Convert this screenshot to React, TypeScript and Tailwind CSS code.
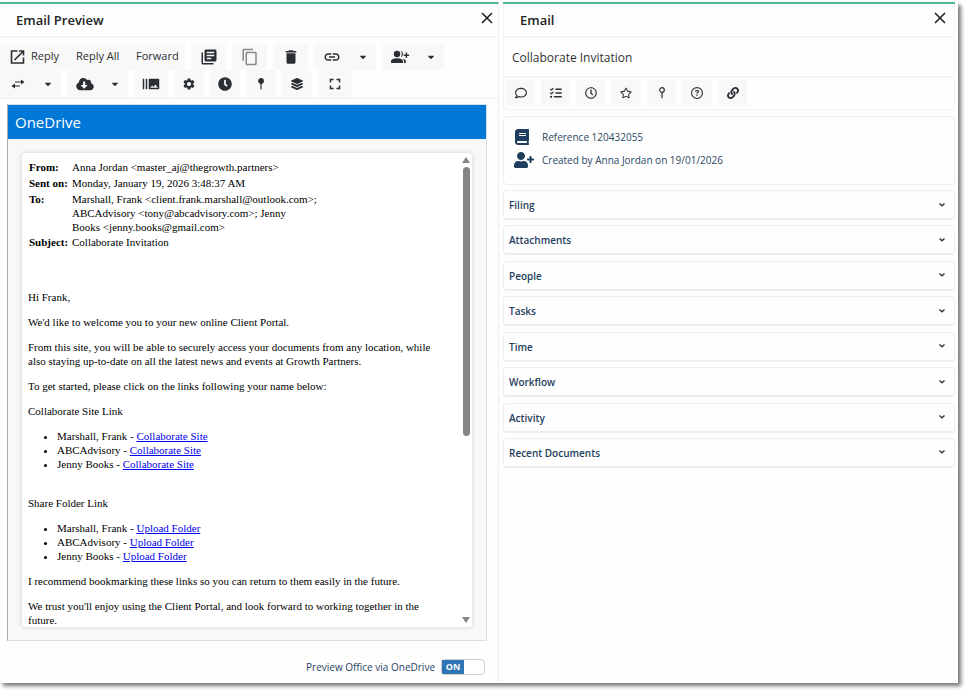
import type { ReactNode } from "react";
import {
  FaBook,
  FaCaretDown,
  FaClock,
  FaCloudDownloadAlt,
  FaLayerGroup,
  FaLink,
  FaRegClock,
  FaRegComment,
  FaRegStar,
  FaUserPlus,
} from "react-icons/fa";
import { FaListCheck, FaRegCircleQuestion } from "react-icons/fa6";
import {
  MdBurstMode,
  MdContentCopy,
  MdDelete,
  MdFullscreen,
  MdLibraryBooks,
  MdLink,
  MdSettings,
} from "react-icons/md";

const sections = [
  "Filing",
  "Attachments",
  "People",
  "Tasks",
  "Time",
  "Workflow",
  "Activity",
  "Recent Documents",
];

const recipients = ["Marshall, Frank", "ABCAdvisory", "Jenny Books"];

function OpenIcon() {
  return (
    <svg viewBox="0 0 16 16" className="size-4" fill="none" stroke="currentColor" strokeWidth="1.6">
      <path d="M7.5 2H1.500v12h12V8.5" />
      <path d="M9 2H13.500v4.500M13.500 2 4.500 11" />
    </svg>
  );
}

function PeopleAddIcon() {
  return (
    <svg viewBox="0 0 20 16" className="h-4 w-5" fill="currentColor">
      <circle cx="7" cy="5" r="3.200" />
      <path d="M1 14v-1.600C1 10 4.500 9.300 7 9.300s6 .7 6 3.100V14z" />
      <path d="M11 1.900c2.600.4 2.600 5.800 0 6.200 1-1.800 1-4.400 0-6.200zM14 14v-1.800c0-1-.5-1.900-1.200-2.500 1.600.3 3 1.100 3 2.600V14z" />
      <path d="M15.700 3.500h1.400v2h2v1.400h-2v2h-1.400v-2h-2V5.500h2z" />
    </svg>
  );
}

function SwapIcon() {
  return (
    <svg viewBox="0 0 14 12" className="h-3 w-3.5" fill="none" stroke="currentColor" strokeWidth="1.2">
      <path d="M4 4h8M9 8H1.500" />
      <path d="M10 1.500 13.500 4 10 6.500zM4 5.500.5 8 4 10.500z" fill="currentColor" stroke="none" />
    </svg>
  );
}

function PinIcon({ filled = false }: { filled?: boolean }) {
  return (
    <svg viewBox="0 0 8 14" className="h-3.5 w-2" stroke="currentColor" strokeWidth="1.2">
      <circle cx="4" cy="4" r="2.300" fill={filled ? "currentColor" : "none"} />
      <path d="M4 6.300v6" />
    </svg>
  );
}

function CloseButton() {
  return (
    <button type="button" aria-label="Close" className="mb-1 p-0.5 text-[#222]">
      <svg viewBox="0 0 12 12" className="size-3" stroke="currentColor" strokeWidth="1.6">
        <path d="M1 1l10 10M11 1 1 11" />
      </svg>
    </button>
  );
}

function Tool({ label, className, children }: { label: string; className: string; children: ReactNode }) {
  return (
    <button
      type="button"
      aria-label={label}
      className={`flex h-[27px] items-center justify-center rounded bg-[#f8f8f8] ${className}`}
    >
      {children}
    </button>
  );
}

function SplitTool({ label, className, children }: { label: string; className: string; children: ReactNode }) {
  return (
    <div className={`flex h-[27px] items-center rounded bg-[#f8f8f8] ${className}`}>
      <button type="button" aria-label={label} className="flex flex-1 justify-center">
        {children}
      </button>
      <button type="button" aria-label={`${label} options`} className="flex w-[26px] justify-center">
        <FaCaretDown className="size-2.5" />
      </button>
    </div>
  );
}

function LinkList({ text }: { text: string }) {
  return (
    <ul className="list-disc pl-[29px]">
      {recipients.map((name) => (
        <li key={name}>
          {name} -{" "}
          <a href="#" className="text-[#0000ee] underline">
            {text}
          </a>
        </li>
      ))}
    </ul>
  );
}

function Message() {
  return (
    <div className="min-w-0 flex-1 pt-[7px] pl-1.5 font-['Liberation_Serif',serif] text-[11px] leading-[14px] text-black">
      <table className="text-left">
        <tbody className="align-top">
          <tr>
            <th className="w-11 pb-0.5 pl-px whitespace-nowrap">From:</th>
            <td className="w-[270px] pb-0.5">Anna Jordan &lt;master_aj@thegrowth.partners&gt;</td>
          </tr>
          <tr>
            <th className="pr-1 pb-0.5 pl-px whitespace-nowrap">Sent on:</th>
            <td className="pb-0.5">Monday, January 19, 2026 3:48:37 AM</td>
          </tr>
          <tr>
            <th className="pb-px pl-px">To:</th>
            <td className="pb-px">
              Marshall, Frank &lt;client.frank.marshall@outlook.com&gt;;
              <br />
              ABCAdvisory &lt;tony@abcadvisory.com&gt;; Jenny
              <br />
              Books &lt;jenny.books@gmail.com&gt;
            </td>
          </tr>
          <tr>
            <th className="pl-px">Subject:</th>
            <td>Collaborate Invitation</td>
          </tr>
        </tbody>
      </table>
      <div className="mt-[41px] space-y-[11px] pr-5">
        <p>Hi Frank,</p>
        <p>We'd like to welcome you to your new online Client Portal.</p>
        <p>
          From this site, you will be able to securely access your documents from any location, while
          <br />
          also staying up-to-date on all the latest news and events at Growth Partners.
        </p>
        <p>To get started, please click on the links following your name below:</p>
        <p>Collaborate Site Link</p>
        <LinkList text="Collaborate Site" />
        <p className="pt-3.5">Share Folder Link</p>
        <LinkList text="Upload Folder" />
        <p>I recommend bookmarking these links so you can return to them easily in the future.</p>
        <p>
          We trust you'll enjoy using the Client Portal, and look forward to working together in the
          <br />
          future.
        </p>
      </div>
    </div>
  );
}

function Scrollbar() {
  return (
    <div className="flex w-3 flex-col items-center py-1 text-[#858585]" aria-hidden="true">
      <svg viewBox="0 0 8 6" className="h-1.5 w-2" fill="currentColor">
        <path d="M4 0 8 6H0z" />
      </svg>
      <div className="mt-1 h-[269px] w-[7px] rounded-full bg-[#858585]" />
      <svg viewBox="0 0 8 6" className="mt-auto h-1.5 w-2" fill="currentColor">
        <path d="M4 6 8 0H0z" />
      </svg>
    </div>
  );
}

function PreviewPane() {
  return (
    <section className="flex min-w-0 flex-col border-t-2 border-r border-t-[#4cb88b] border-r-[#eee]">
      <header className="flex h-[34px] items-center justify-between border-b-2 border-[#f4f4f4] pr-[3px] pl-4">
        <h1 className="pt-0.5 text-[13px] font-semibold text-[#222]">Email Preview</h1>
        <CloseButton />
      </header>
      <div className="border-b-2 border-[#f4f4f4] pt-[5px] text-[11px] text-[#2b2f33]">
        <div className="flex gap-1.5">
          <div className="flex h-[27px] w-[185px] items-center rounded bg-[#f8f8f8] pl-2.5">
            <button type="button" className="flex w-[66px] items-center gap-[5px]">
              <OpenIcon />
              Reply
            </button>
            <button type="button" className="w-[60px] text-left">Reply All</button>
            <button type="button">Forward</button>
          </div>
          <Tool label="Library" className="w-[35px]"><MdLibraryBooks className="size-[18px]" /></Tool>
          <Tool label="Copy" className="w-[35px]"><MdContentCopy className="size-[18px] text-[#888]" /></Tool>
          <Tool label="Delete" className="w-[35px]"><MdDelete className="size-[18px]" /></Tool>
          <SplitTool label="Link" className="w-[62px]"><MdLink className="size-[18px]" /></SplitTool>
          <SplitTool label="Add people" className="w-[62px]"><PeopleAddIcon /></SplitTool>
        </div>
        <div className="flex gap-1.5">
          <SplitTool label="Transfer" className="w-[61px]"><SwapIcon /></SplitTool>
          <SplitTool label="Download" className="w-[61px]"><FaCloudDownloadAlt className="h-3.5 w-[18px]" /></SplitTool>
          <Tool label="Images" className="w-[34px]"><MdBurstMode className="size-[18px]" /></Tool>
          <Tool label="Settings" className="w-[30px]"><MdSettings className="size-3.5" /></Tool>
          <Tool label="History" className="w-[30px]"><FaClock className="size-3.5" /></Tool>
          <Tool label="Pin" className="w-[30px]"><PinIcon filled /></Tool>
          <Tool label="Layers" className="w-[30px]"><FaLayerGroup className="size-3" /></Tool>
          <Tool label="Full screen" className="w-[34px]"><MdFullscreen className="size-[18px]" /></Tool>
        </div>
      </div>
      <div className="mt-[5px] mr-[11px] ml-[7px] border border-[#ddd] border-l-[#aaa] bg-[#f8f8f8]">
        <h2 className="flex h-[34px] items-center bg-[#0078d7] pl-[7px] text-[15px] text-white">OneDrive</h2>
        <div className="m-3.5 mb-[13px] flex h-[474px] overflow-hidden rounded-sm bg-white shadow-[0_0_3px_2px_#e6e6e6]">
          <Message />
          <Scrollbar />
        </div>
      </div>
      <label className="mt-[18px] mr-[13px] flex items-center justify-end gap-1.5 text-[10px] leading-4 text-[#1f4466]">
        Preview Office via OneDrive
        <input type="checkbox" role="switch" defaultChecked className="peer sr-only" />
        <span className="flex h-4 w-11 rounded-sm border border-[#ccc] bg-white">
          <span className="flex w-[22px] items-center justify-center bg-[#2e75b6] text-[9px] font-bold text-white">ON</span>
        </span>
      </label>
    </section>
  );
}

function DetailPane() {
  return (
    <section className="ml-1 min-w-0 border-t-2 border-t-[#4cb88b]">
      <header className="flex h-[34px] items-center justify-between border-x border-b-2 border-[#f4f4f4] pr-1.5 pl-4">
        <h1 className="pt-0.5 text-[13px] font-semibold text-[#222]">Email</h1>
        <CloseButton />
      </header>
      <h2 className="flex h-10 items-center border-x border-b-2 border-[#f4f4f4] pt-0.5 pl-2 text-[12px] text-[#333]">
        Collaborate Invitation
      </h2>
      <div className="flex gap-1.5 rounded-b border border-t-0 border-[#f2f2f2] px-0.5 pt-px pb-[3px] text-[#2b2f33]">
        <Tool label="Comment" className="w-[29px]"><FaRegComment className="size-3" /></Tool>
        <Tool label="Tasks" className="w-[29px]"><FaListCheck className="size-3" /></Tool>
        <Tool label="Time" className="w-[29px]"><FaRegClock className="size-3" /></Tool>
        <Tool label="Favourite" className="w-[30px]"><FaRegStar className="size-3" /></Tool>
        <Tool label="Pin" className="w-[29px]"><PinIcon /></Tool>
        <Tool label="Help" className="w-[30px]"><FaRegCircleQuestion className="size-3" /></Tool>
        <Tool label="Copy link" className="w-[29px]"><FaLink className="size-3" /></Tool>
      </div>
      <div className="mt-1.5 h-[69px] rounded border border-[#eee] pt-2 pl-2.5 text-[10px] text-[#2b4763]">
        <p className="flex h-[23px] items-center">
          <span className="w-7"><FaBook className="size-4 text-[#1f3d5c]" /></span>
          <span className="pt-0.5">Reference 120432055</span>
        </p>
        <p className="flex h-[23px] items-center">
          <span className="w-7"><FaUserPlus className="size-5 text-[#1f3d5c]" /></span>
          <span className="pt-0.5">Created by Anna Jordan on 19/01/2026</span>
        </p>
      </div>
      <div className="mt-[5px] flex min-h-[278px] flex-col justify-between">
        {sections.map((name) => (
          <button
            key={name}
            type="button"
            className="flex h-[30px] items-center justify-between rounded border border-b-2 border-[#eee] pr-2 pl-[5px] text-[10px] font-semibold text-[#1f3d5c]"
          >
            <span className="pt-0.5">{name}</span>
            <svg viewBox="0 0 8 6" className="h-1.5 w-2" fill="none" stroke="#333" strokeWidth="1.400">
              <path d="M1.500 1.500 4 3.800l2.500-2.300" />
            </svg>
          </button>
        ))}
      </div>
    </section>
  );
}

export default function App() {
  return (
    <div className="min-h-screen bg-white pt-0.5 pr-[7px] pb-[7px] font-['Open_Sans',sans-serif]">
      <main className="grid min-h-[681px] grid-cols-[499fr_456fr] bg-[#fefefe] pr-[3px] shadow-[3px_3px_4px_#777]">
        <PreviewPane />
        <DetailPane />
      </main>
    </div>
  );
}
